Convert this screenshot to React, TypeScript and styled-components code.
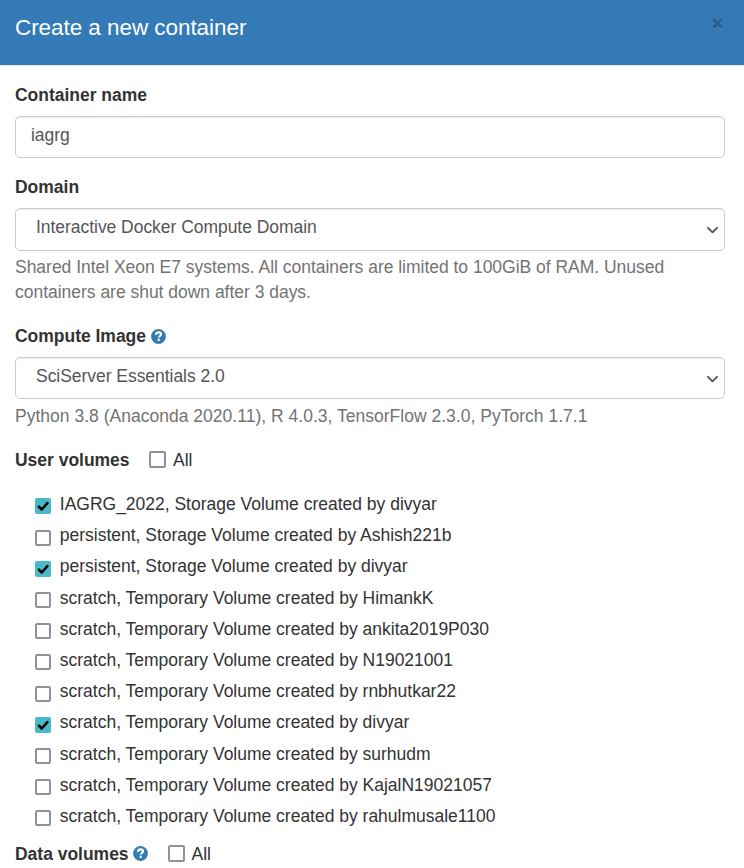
import React from "react";
import styled, { createGlobalStyle } from "styled-components";

const GlobalStyle = createGlobalStyle`
  * { box-sizing: border-box; }
  body {
    margin: 0;
    background: #fff;
    color: #333;
    font-family: "Nimbus Sans", "Liberation Sans", Arial, sans-serif;
    font-size: 17.5px;
    line-height: 25px;
    letter-spacing: -0.02px;
    overflow: hidden;
  }
`;

const Dialog = styled.main`
  width: 744px;
  height: 868px;
  overflow: hidden;
`;

const Header = styled.header`
  display: flex;
  justify-content: space-between;
  height: 66px;
  padding: 12px 20px 0 15px;
  background: #337ab7;
  border-bottom: 1px solid #e5e5e5;
`;

const Title = styled.h1`
  margin: 0;
  color: #fff;
  font-size: 22.5px;
  font-weight: 400;
  letter-spacing: -0.06px;
  line-height: 32px;
`;

const Close = styled.button`
  display: flex;
  width: 13px;
  height: 14px;
  margin-top: 5px;
  padding: 0;
  border: 0;
  background: none;
`;

const Body = styled.div`
  padding: 17px 19px 0 15px;
`;

const Field = styled.section<{ $height: number }>`
  display: flex;
  flex-direction: column;
  height: ${(p) => p.$height}px;
`;

const Label = styled.div`
  display: flex;
  align-items: center;
  height: 25px;
  margin-bottom: 8px;
  font-weight: 700;
  white-space: nowrap;
`;

const Control = styled.div<{ $inset?: number; $height?: number }>`
  display: flex;
  justify-content: space-between;
  flex: none;
  height: ${(p) => p.$height ?? 42}px;
  padding: 6px 6px 0 ${(p) => p.$inset ?? 15}px;
  border: 1px solid #ccc;
  border-radius: 5px;
  box-shadow: inset 0 1px 1px rgba(0, 0, 0, 0.075);
  color: #555;
  letter-spacing: -0.04px;
`;

const Chevron = styled.svg`
  width: 12px;
  height: 8px;
  margin-top: 11px;
`;

const Help = styled.p<{ $gap?: number; $tracking?: number }>`
  margin: ${(p) => p.$gap ?? 4}px 0 0;
  color: #737373;
  letter-spacing: ${(p) => p.$tracking ?? -0.02}px;
  white-space: nowrap;
`;

const HelpIcon = styled.svg`
  width: 15px;
  height: 15px;
  margin: -1px 0 0 4.5px;
`;

const SelectAll = styled.label`
  display: flex;
  align-items: center;
  gap: 7px;
  margin-left: 19.5px;
  font-weight: 400;
`;

const Box = styled.span<{ $size: number }>`
  display: block;
  flex: none;
  width: ${(p) => p.$size}px;
  height: ${(p) => p.$size}px;
  border: 2px solid #8f8f9d;
  border-radius: 2px;
  background: #fff;
`;

const AllBox = styled(Box)`
  margin-top: -2px;
`;

const Checked = styled.svg`
  display: block;
  flex: none;
  width: 16px;
  height: 16px;
`;

const Volumes = styled.ul`
  margin: 0 0 6.65px;
  padding: 0 0 0 20px;
  list-style: none;
`;

const Volume = styled.li`
  display: flex;
  gap: 8.8px;
  height: 31.2px;
  letter-spacing: -0.01px;
  white-space: nowrap;
`;

const Tick = styled.span`
  padding-top: 6.4px;
`;

const volumes: [string, boolean][] = [
  ["IAGRG_2022, Storage Volume created by divyar", true],
  ["persistent, Storage Volume created by Ashish221b", false],
  ["persistent, Storage Volume created by divyar", true],
  ["scratch, Temporary Volume created by HimankK", false],
  ["scratch, Temporary Volume created by ankita2019P030", false],
  ["scratch, Temporary Volume created by N19021001", false],
  ["scratch, Temporary Volume created by rnbhutkar22", false],
  ["scratch, Temporary Volume created by divyar", true],
  ["scratch, Temporary Volume created by surhudm", false],
  ["scratch, Temporary Volume created by KajalN19021057", false],
  ["scratch, Temporary Volume created by rahulmusale1100", false],
];

const Question = () => (
  <HelpIcon viewBox="0 0 15 15">
    <circle cx="7.5" cy="7.5" r="7.4" fill="#337ab7" />
    <path d="M5 5.9C5 4 6.1 3.4 7.5 3.4s2.5.8 2.5 2.1c0 1.5-2.2 1.5-2.2 3.1" fill="none" stroke="#fff" strokeWidth="2.1" />
    <path d="M6.6 9.7h2.2v2.2H6.6z" fill="#fff" />
  </HelpIcon>
);

const Arrow = () => (
  <Chevron viewBox="0 0 12 8">
    <path d="m2 1.8 4.5 4.5L11 1.8" fill="none" stroke="#55555a" strokeWidth="1.9" strokeLinecap="round" strokeLinejoin="round" />
  </Chevron>
);

const CheckedBox = () => (
  <Checked viewBox="0 0 16 16">
    <rect width="16" height="16" rx="2" fill="#48b9c7" />
    <path d="m3.9 8.7 2.8 2.8 5.7-6.4" fill="none" stroke="#000" strokeWidth="2.5" strokeLinecap="round" strokeLinejoin="round" />
  </Checked>
);

export default function App() {
  return (
    <>
      <GlobalStyle />
      <Dialog>
        <Header>
          <Title>Create a new container</Title>
          <Close aria-label="Close">
            <svg width="13" height="14" viewBox="0 0 13 14">
              <path d="m2.3 3.4 8.6 8.6m0-8.6L2.3 12" stroke="#5d96c8" strokeWidth="3" />
              <path d="m2.3 2.4 8.6 8.6m0-8.6L2.3 11" stroke="#29628f" strokeWidth="3.3" />
            </svg>
          </Close>
        </Header>
        <Body>
          <Field $height={92}>
            <Label>Container name</Label>
            <Control>iagrg</Control>
          </Field>
          <Field $height={149}>
            <Label>Domain</Label>
            <Control $inset={20} $height={43}>Interactive Docker Compute Domain<Arrow /></Control>
            <Help>
              Shared Intel Xeon E7 systems. All containers are limited to 100GiB of RAM. Unused
              <br />
              containers are shut down after 3 days.
            </Help>
          </Field>
          <Field $height={124}>
            <Label>Compute Image<Question /></Label>
            <Control $inset={20}>SciServer Essentials 2.0<Arrow /></Control>
            <Help $gap={5} $tracking={0.015}>Python 3.8 (Anaconda 2020.11), R 4.0.3, TensorFlow 2.3.0, PyTorch 1.7.1</Help>
          </Field>
          <Field $height={44}>
            <Label>
              User volumes
              <SelectAll><AllBox $size={17} />All</SelectAll>
            </Label>
          </Field>
          <Volumes>
            {volumes.map(([name, checked]) => (
              <Volume key={name}>
                <Tick>{checked ? <CheckedBox /> : <Box $size={16} />}</Tick>
                {name}
              </Volume>
            ))}
          </Volumes>
          <Label>
            Data volumes<Question />
            <SelectAll><AllBox $size={17} />All</SelectAll>
          </Label>
        </Body>
      </Dialog>
    </>
  );
}
